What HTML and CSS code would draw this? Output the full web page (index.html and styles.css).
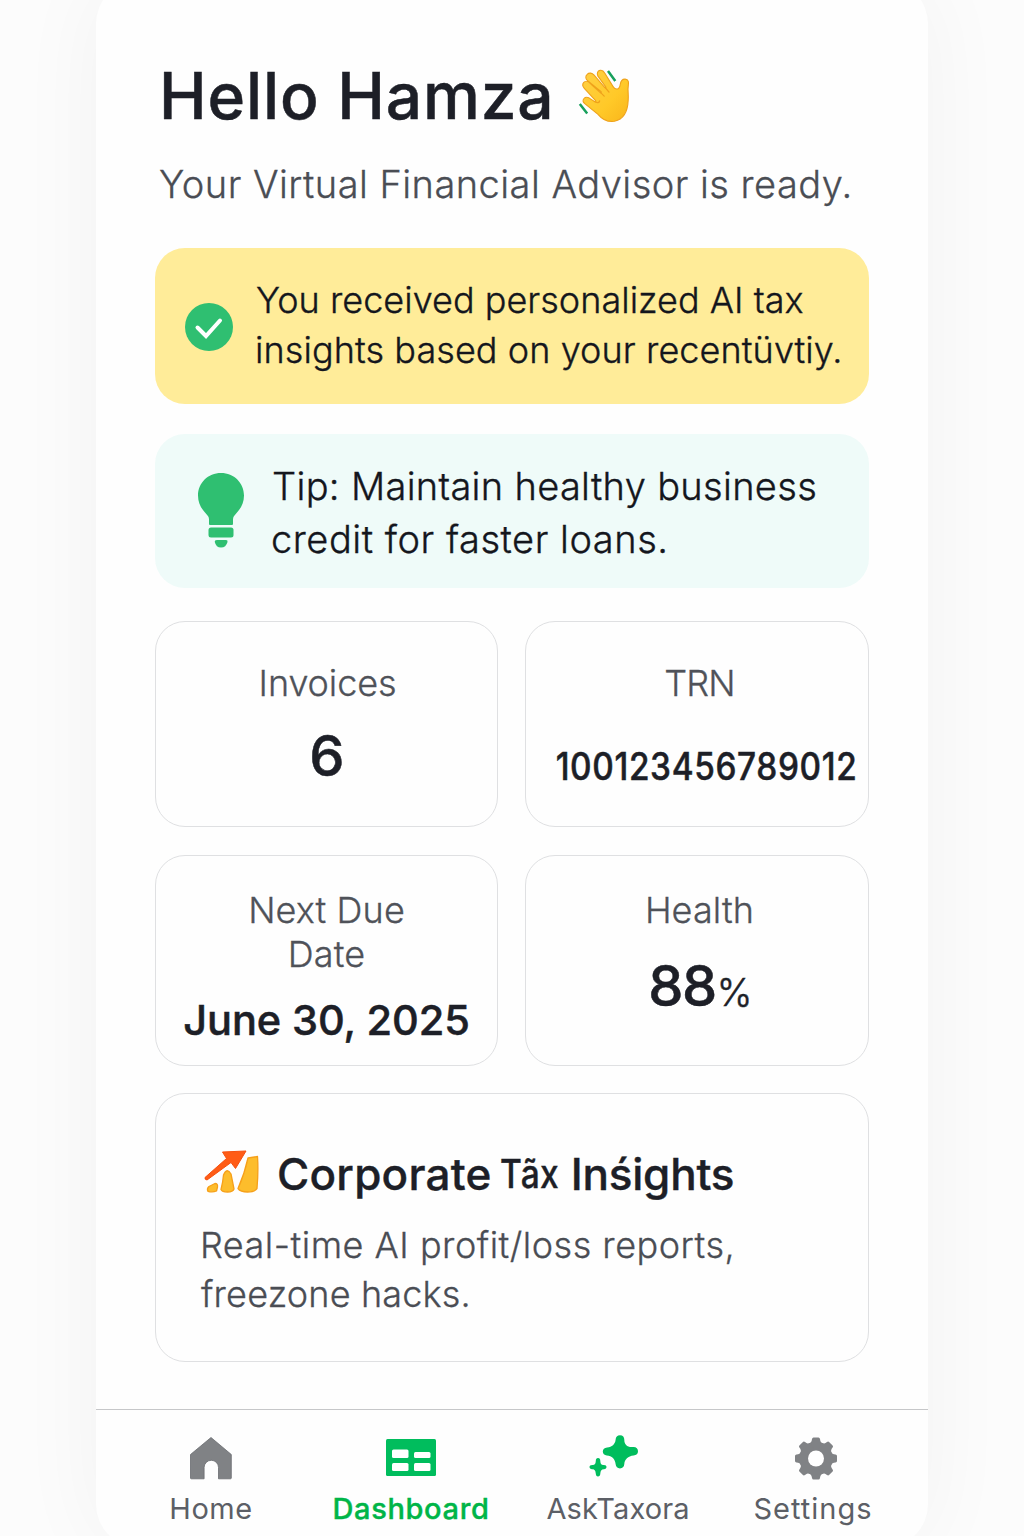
FILE: index.html
```html
<!DOCTYPE html>
<html lang="en">
<head>
<meta charset="utf-8">
<title>Taxora Dashboard</title>
<link rel="stylesheet" href="styles.css">
</head>
<body>
<div class="phone">
  <main class="content">
    <header class="greeting">
      <h1 class="greeting-title">Hello Hamza</h1>
      <svg class="wave" viewBox="0 0 58 58" aria-hidden="true">
        <defs>
          <linearGradient id="hand" x1="0" y1="0" x2="1" y2="1">
            <stop offset="0" stop-color="#ffd044"/><stop offset=".6" stop-color="#ffc928"/><stop offset="1" stop-color="#f9b51b"/>
          </linearGradient>
        </defs>
        <path d="M31 4 38.300 14M2.800 37 10.200 46.500" fill="none" stroke="#18a05c" stroke-width="2.500"/>
        <path d="M10.200 7.300c2-2 5-1.300 6.700.6l10.900 12.700c.6.5 1.300.1 1-.7L20.800 8.900c-1.200-2.800.1-5 2-5.500 2-.6 3.800.6 4.900 2.700l8.400 13.500c1 1.600 2.500 2.600 4.100 2.400 2.300-.2 2.600-2 3-4.400.6-3.600 2.100-5.700 5-5.500 3.400.3 3.600 3 3.100 6.400-.8 4.700.4 9-.1 14.800C50.700 44.300 46.500 52.500 37.500 54.300c-7.500.9-12.800-2.400-16.500-7L7.800 36.700c-1.800-1.600-2-3.800-.8-5.200 1.300-1.500 3.400-1.500 5.300-.4l5.500 3.600c.9.500 1.500-.3.8-1.100L7.300 21.300c-1.800-2-1.800-4.500-.5-5.900 1.500-1.500 4-1.200 5.700.5l10.700 9.700c.8.600 1.500-.1.900-.9L10.300 13.500c-1.600-2-1.700-4.700-.1-6.200z" fill="url(#hand)" stroke="#efa21a" stroke-width="1.100"/>
        <path d="M28.300 20.600l3.700 4.500M23.700 25.600l3.500 3.500M18.600 35c2 1.200 3.500.8 4-1" fill="none" stroke="#efa21a" stroke-width="1.300" stroke-linecap="round"/>
      </svg>
    </header>
    <p class="subtitle">Your Virtual Financial Advisor is ready.</p>

    <section class="alert alert-success">
      <svg class="check" viewBox="0 0 48 48" aria-hidden="true"><circle cx="24" cy="24" r="24" fill="#2fbf71"/><path d="M12.500 24.500l8.500 8.500L35 17.500" fill="none" stroke="#fff" stroke-width="4" stroke-linecap="round"/></svg>
      <p class="alert-text"><span class="line">You received personalized AI tax</span><span class="line line-second">insights based on your recentüvtiy.</span></p>
    </section>

    <section class="alert alert-tip">
      <svg class="bulb" viewBox="0 0 46 76" aria-hidden="true"><g fill="#2fbf71"><path d="M23 0C36 0 46 10 46 22.500c0 7.500-3 12.500-7 17-3 3.300-4 4.500-4 7V51q0 1-1 1H12q-1 0-1-1v-4.500c0-2.500-1-3.700-4-7-4-4.500-7-9.500-7-17C0 10 10 0 23 0z"/><rect x="10.500" y="54.500" width="25" height="10" rx="2.500"/><path d="M19 67h9q2 0 1.500 2-1.500 5.500-6.500 5.500T16.800 69Q16.500 67 19 67z"/></g></svg>
      <p class="alert-text tip-text"><span class="line">Tip: Maintain healthy business</span><span class="line line-second">credit for faster loans.</span></p>
    </section>

    <section class="tiles">
      <article class="tile"><h2 class="tile-label label-invoices">Invoices</h2><p class="tile-value value-count">6</p></article>
      <article class="tile tile-right"><h2 class="tile-label label-trn">TRN</h2><p class="tile-value value-trn">100123456789012</p></article>
      <article class="tile tile-low"><h2 class="tile-label">Next Due<br>Date</h2><p class="tile-value value-date">June 30, 2025</p></article>
      <article class="tile tile-low tile-right"><h2 class="tile-label">Health</h2><p class="tile-value value-health">88<span class="percent">%</span></p></article>
    </section>

    <section class="insights">
      <div class="insights-head">
        <svg class="chart" viewBox="0 0 56 44" aria-hidden="true">
          <g fill="#fdbd2c" stroke="#f6a019" stroke-width="1.300" stroke-linejoin="round">
            <path d="M5 36.500 11 33.500q3 0 2.500 3.500l-1 4q-4 1.500-8.500.3-1.500-2.500 1-4.800z"/>
            <path d="M19.500 25q3.500-8 7.500-1L30 39q-1 3-6.500 3T17 39.500q2-8 2.500-14.500z"/>
            <path d="M44 8 53.500 6.500q1 15-.5 32Q50.500 42 43.500 42q-7 0-9.500-3.500Q40.500 24 44 8z"/>
          </g>
          <path d="M1 27.500 22.500 8.500 18.500 2 42 1 31.500 18.500 27 12.500 3 30Q.5 29.500 1 27.500z" fill="#ff5c16" stroke="#f5500f" stroke-width="1" stroke-linejoin="round"/>
        </svg>
        <h2 class="insights-title"><span>Corporate</span> <span class="word-tax">Tãx</span> <span class="word-insights">Inśights</span></h2>
      </div>
      <p class="insights-text"><span class="line">Real-time AI profit/loss reports,</span><span class="line line-second">freezone hacks.</span></p>
    </section>
  </main>

  <nav class="tabs">
    <a class="tab tab-home"><svg class="tab-icon" viewBox="0 0 50 46" aria-hidden="true"><path d="M25 3.500 45.300 20.500V44q0 .8-.8.8H32.500V33.500a7.200 7.200 0 0 0-14.400 0V44.800H5.300q-.8 0-.8-.8V20.500z" fill="#808285" stroke="#696c70" stroke-width=".8"/></svg><span>Home</span></a>
    <a class="tab tab-dashboard"><svg class="tab-icon" viewBox="0 0 50 46" aria-hidden="true"><rect y="5" width="50" height="37" rx="1.500" fill="#00bd5d"/><g fill="#fff"><rect x="6" y="15.500" width="16.500" height="8.500" rx="1.500"/><rect x="28" y="18" width="16.500" height="6" rx="1.500"/><rect x="6" y="29" width="16.500" height="8" rx="1.500"/><rect x="28" y="29" width="16.500" height="8" rx="1.500"/></g></svg><span>Dashboard</span></a>
    <a class="tab tab-ask"><svg class="tab-icon" viewBox="0 0 50 46" aria-hidden="true"><g fill="#00bd5d"><path d="M32 1.200c3 0 4.300 2 4.300 4.500 0 4.600 2.500 7.300 7.300 7.300h2c2.800 0 4.400 1.600 4.400 4.300 0 2.500-1.600 4-4.400 4.200-5.600.5-8.900 3.800-9.300 8.500-.2 2.900-1.800 4.400-4.300 4.400s-4.200-1.600-4.400-4.400c-.5-5-3.600-8-8.800-8.500-2.500-.3-4-1.800-4-4s1.600-3.900 4.300-4.100c5-.5 8-3 8.500-7.700.2-2.800 1.600-4.500 4.400-4.500z"/><path d="M10 24c1.700 0 2.200 1 2.300 2.700.2 3 .8 4.100 3.600 4.300 1.800.1 2.600.7 2.600 2s-.8 2-2.600 2.200c-2.700.2-3.300 1.400-3.600 4.500-.2 1.800-.8 2.800-2.300 2.800s-2-1-2.200-2.800c-.3-3.100-.9-4.300-3.600-4.500-1.800-.2-2.700-.9-2.700-2.200s.9-1.900 2.700-2c2.800-.2 3.400-1.300 3.600-4.300.1-1.700.7-2.700 2.200-2.700z"/></g></svg><span>AskTaxora</span></a>
    <a class="tab tab-settings"><svg class="tab-icon" viewBox="0 0 50 46" aria-hidden="true"><g transform="translate(25 24.500)"><g fill="#808285"><circle r="16.700"/><g id="teeth"><path id="tooth" d="M-7-14.500C-5-16-4.300-17-4-19.500Q-3.700-21-2.500-21h5Q3.700-21 4-19.500C4.300-17 5-16 7-14.500L5-8H-5z"/><use href="#tooth" transform="rotate(90)"/><use href="#tooth" transform="rotate(180)"/><use href="#tooth" transform="rotate(270)"/></g><use href="#teeth" transform="rotate(45)"/></g><circle r="8" fill="#fff"/></g></svg><span>Settings</span></a>
  </nav>
</div>
</body>
</html>
```
FILE: styles.css
```css
* { box-sizing: border-box; }
body {
  margin: 0;
  height: 1536px;
  overflow: hidden;
  background: #fcfcfc;
  font-family: Inter, "Liberation Sans", sans-serif;
  color: #1d1f27;
}
h1, h2, p { margin: 0; }
.line { display: block; white-space: nowrap; }

.phone {
  width: 832px;
  height: 1568px;
  margin: -20px auto 0;
  display: flex;
  flex-direction: column;
  background: #fefefe;
  border-radius: 44px;
  box-shadow: 0 0 90px rgba(0, 0, 0, .045);
}
.content { height: 1429px; padding: 76px 59px 0; }

.greeting { display: flex; gap: 22px; padding-left: 4px; }
.greeting-title {
  font-size: 64px;
  line-height: 80px;
  font-weight: 500;
  letter-spacing: .85px;
  -webkit-text-stroke: .5px currentColor;
}
.wave { width: 58px; height: 58px; margin-top: 11px; }
.subtitle {
  margin: 25px 0 41px;
  padding-left: 4px;
  font-size: 38px;
  line-height: 46px;
  font-weight: 300;
  letter-spacing: .46px;
  -webkit-text-stroke: .3px currentColor;
  color: #4a4d54;
}

.alert { display: flex; border-radius: 30px; color: #14161d; }
.alert-success { height: 156px; padding: 27px 0 0 30px; gap: 23px; background: #ffec99; }
.alert-tip { height: 154px; margin-top: 30px; padding: 26px 0 0 43px; gap: 28px; background: #effbf9; }
.check { width: 48px; height: 48px; margin-top: 28px; }
.bulb { width: 46px; height: 76px; margin-top: 13px; }
.alert-text {
  font-size: 36px;
  line-height: 50px;
  font-weight: 300;
  letter-spacing: .02px;
  -webkit-text-stroke: .35px currentColor;
}
.alert-text .line-second { margin-left: -1px; letter-spacing: .08px; }
.tip-text { font-size: 38px; line-height: 53px; letter-spacing: .32px; }
.tip-text .line-second { letter-spacing: .53px; }

.tiles {
  display: grid;
  grid-template-columns: 343px 344px;
  grid-template-rows: 206px 211px;
  gap: 28px 27px;
  margin-top: 33px;
}
.tile {
  display: flex;
  flex-direction: column;
  align-items: center;
  padding-top: 39px;
  border: 1px solid #dfe0e2;
  border-radius: 30px;
}
.tile-low { padding-top: 32px; }
.tile-right { padding-left: 5px; }
.tile-label {
  font-size: 36px;
  line-height: 44px;
  font-weight: 300;
  letter-spacing: .1px;
  text-align: center;
  -webkit-text-stroke: .3px currentColor;
  color: #4f5259;
}
.label-invoices { margin-left: 2px; letter-spacing: -.1px; }
.label-trn { letter-spacing: -.8px; }
.tile-value { font-weight: 500; white-space: nowrap; -webkit-text-stroke: .5px currentColor; }
.value-count { margin: 18px 0 0 1px; font-size: 56px; line-height: 66px; }
.value-trn {
  margin: 40px 0 0 14px;
  font-size: 37.500px;
  line-height: 44px;
  letter-spacing: .7px;
  transform: scaleX(.89);
}
.value-date { margin-top: 19px; font-size: 41.500px; line-height: 50px; letter-spacing: -.1px; }
.value-health { margin-top: 21px; font-size: 56px; line-height: 66px; letter-spacing: -1.500px; }
.percent { margin-left: 1px; font-size: 38px; font-weight: 300; }

.insights {
  height: 269px;
  margin-top: 27px;
  padding: 53px 0 0 43px;
  border: 1px solid #dfe0e2;
  border-radius: 30px;
}
.insights-head { display: flex; padding-left: 5px; gap: 17px; }
.chart { width: 56px; height: 44px; margin-top: 3px; }
.insights-title {
  display: flex;
  font-size: 44px;
  line-height: 54px;
  font-weight: 500;
  letter-spacing: .25px;
  white-space: nowrap;
  -webkit-text-stroke: .4px currentColor;
}
.word-tax {
  width: 71px;
  margin-left: 8px;
  font-size: 39px;
  transform: scaleX(.86);
  transform-origin: left center;
}
.word-insights { letter-spacing: -.2px; }
.insights-text {
  margin-top: 20px;
  padding-left: 1px;
  font-size: 36px;
  line-height: 49px;
  font-weight: 300;
  letter-spacing: .5px;
  -webkit-text-stroke: .3px currentColor;
  color: #4a4d54;
}
.insights-text .line-second { padding-left: 1px; letter-spacing: .17px; }

.tabs {
  flex: 1;
  display: grid;
  grid-template-columns: 230px 170px 244px 146px;
  align-content: start;
  padding-top: 24px;
  border-top: 1px solid #c6c7c9;
}
.tab {
  display: flex;
  flex-direction: column;
  align-items: center;
  gap: 11px;
  font-size: 29px;
  line-height: 36px;
  letter-spacing: .5px;
  color: #5c5f66;
}
.tab-icon { width: 50px; height: 46px; }
.tab-dashboard { font-weight: 500; letter-spacing: .65px; color: #00b548; -webkit-text-stroke: .4px currentColor; }
.tab-ask { letter-spacing: .1px; }
.tab-ask .tab-icon { margin-right: 10px; }
.tab-settings { letter-spacing: 1px; }
.tab-settings .tab-icon { margin-left: 5px; }
```
